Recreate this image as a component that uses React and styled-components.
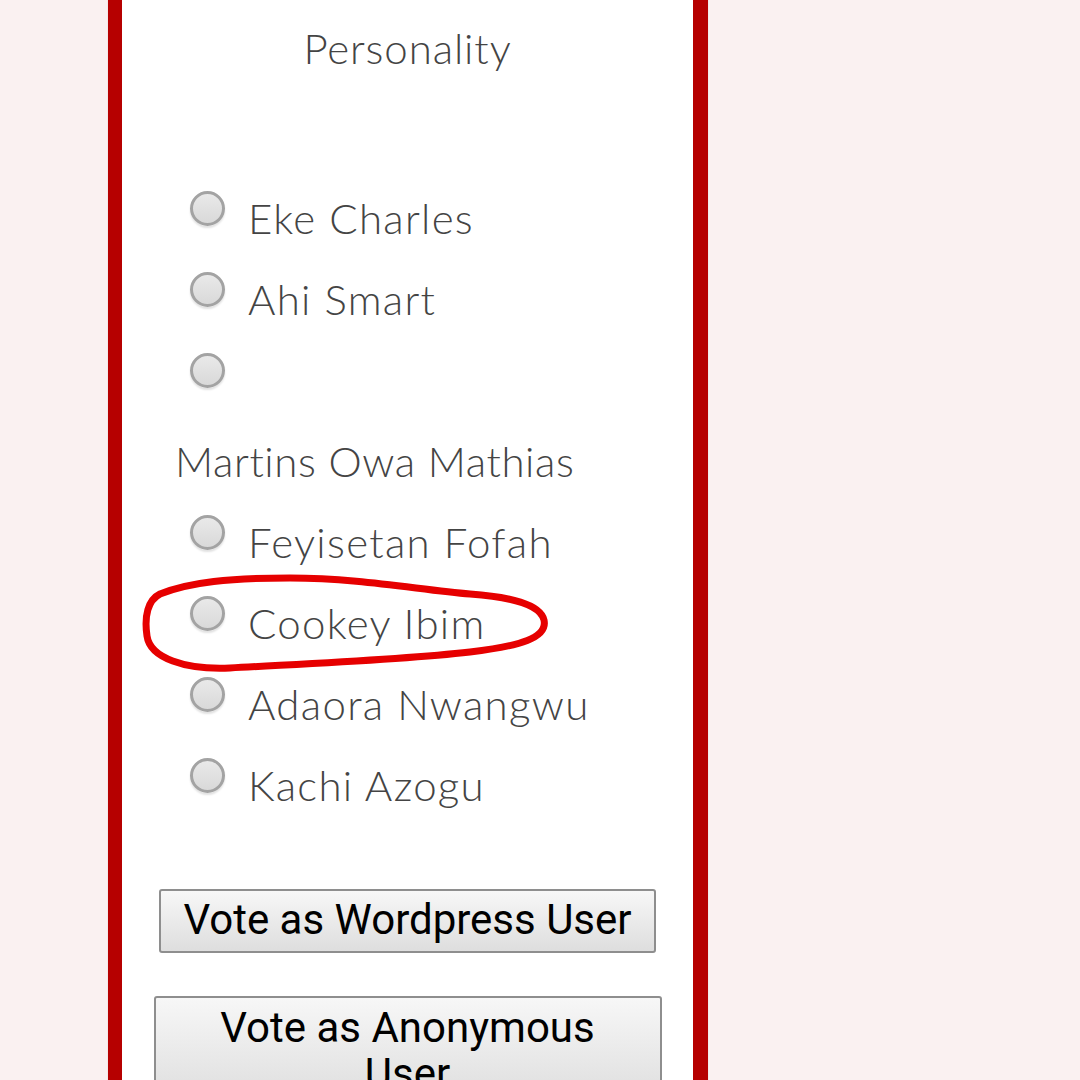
import React from "react";
import styled, { createGlobalStyle } from "styled-components";

const Global = createGlobalStyle`
  html, body { margin: 0; padding: 0; overflow: hidden; }
  body { background: #faf1f1; font-family: "Lato", "Open Sans", sans-serif; }
`;

const Page = styled.div`
  position: relative;
  width: 1080px;
  height: 1080px;
  overflow: hidden;
  background: #faf1f1;
`;

const Panel = styled.section`
  margin-left: 108px;
  width: 571px;
  min-height: 1200px;
  background: #ffffff;
  border-left: 14px solid #b60000;
  border-right: 15px solid #b60000;
  box-shadow: 1px 0 0 #f3e9e9, -1px 0 0 #f3e9e9;
  padding-top: 23px;
  box-sizing: content-box;
`;

const Title = styled.h2`
  margin: 0;
  text-align: center;
  font-family: "Lato", "Open Sans", sans-serif;
  font-weight: 300;
  font-size: 42px;
  line-height: 50px;
  letter-spacing: 0.9px;
  color: #444;
`;

const Options = styled.ul`
  list-style: none;
  margin: 104px 0 0;
  padding: 0 0 0 53px;
`;

const Option = styled.li`
  display: flex;
  flex-wrap: wrap;
  align-items: center;
  min-height: 81px;
`;

const Line = styled.label`
  display: flex;
  align-items: center;
  height: 81px;
  ${({ $full }) => ($full ? "width: 100%;" : "")}
`;

const Radio = styled.input.attrs({ type: "radio", name: "poll" })`
  appearance: none;
  -webkit-appearance: none;
  margin: 0 23px -6px 15px;
  width: 35px;
  height: 35px;
  box-sizing: border-box;
  border-radius: 50%;
  border: 3px solid #a3a3a3;
  background: linear-gradient(#e9e9e9, #d9d9d9);
  box-shadow: 0 2px 2px rgba(0, 0, 0, 0.12);
  transform: translateY(-12px);
`;

const LabelText = styled.span`
  font-family: "Lato", "Open Sans", sans-serif;
  font-weight: 300;
  font-size: 42px;
  color: #444;
  letter-spacing: 1.3px;
`;

const Buttons = styled.div`
  display: flex;
  flex-direction: column;
  align-items: center;
  gap: 43px;
  margin-top: 64px;
`;

const Button = styled.button`
  max-width: 508px;
  padding: 2px 22px 4px;
  border: 2px solid #8e8e8e;
  border-radius: 3px;
  background: linear-gradient(#f7f7f7, #dedede);
  font-family: Roboto, "Liberation Sans", sans-serif;
  font-size: 42px;
  line-height: 42px;
  color: #000;
  min-height: 64px;
  ${({ $wide }) =>
    $wide ? "width: 508px; padding-top: 7px; line-height: 46px;" : ""}
`;

const Annotation = styled.svg`
  position: absolute;
  left: 0;
  top: 0;
  width: 1080px;
  height: 1080px;
  pointer-events: none;
`;

const candidates = [
  { name: "Eke Charles" },
  { name: "Ahi Smart" },
  { name: "Martins Owa Mathias", stacked: true },
  { name: "Feyisetan Fofah" },
  { name: "Cookey Ibim" },
  { name: "Adaora Nwangwu" },
  { name: "Kachi Azogu" },
];

export default function App() {
  return (
    <>
      <Global />
      <Page>
        <Panel>
          <Title>Personality</Title>
          <Options>
            {candidates.map((c) =>
              c.stacked ? (
                <Option key={c.name}>
                  <Line $full>
                    <Radio />
                  </Line>
                  <Line $full>
                    <LabelText style={{ letterSpacing: "0.6px" }}>{c.name}</LabelText>
                  </Line>
                </Option>
              ) : (
                <Option key={c.name}>
                  <Line>
                    <Radio />
                    <LabelText>{c.name}</LabelText>
                  </Line>
                </Option>
              )
            )}
          </Options>
          <Buttons>
            <Button>Vote as Wordpress User</Button>
            <Button $wide>Vote as Anonymous User</Button>
          </Buttons>
        </Panel>
        <Annotation viewBox="0 0 1080 1080">
          <path
            d="M160 594 C 190 582, 230 578, 290 578 C 360 578, 420 590, 470 594 C 510 597, 540 604, 544 620 C 548 638, 520 646, 470 652 C 400 660, 300 664, 230 668 C 185 670, 150 658, 147 636 C 144 616, 148 600, 160 594 Z"
            fill="none"
            stroke="#e60000"
            strokeWidth="7"
            strokeLinejoin="round"
          />
        </Annotation>
      </Page>
    </>
  );
}
